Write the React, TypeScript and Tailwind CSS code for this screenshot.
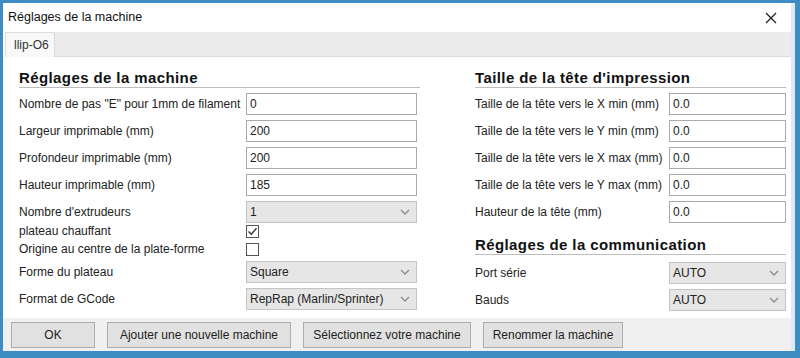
import React from "react";

const font = { fontFamily: "'Liberation Sans', Arial, sans-serif" };

function Chevron() {
  return (
    <svg width="10" height="6" viewBox="0 0 10 6" className="shrink-0">
      <path d="M1 1 L5 5 L9 1" fill="none" stroke="#8a8a8a" strokeWidth="1.3" />
    </svg>
  );
}

function Input({ value, w }: { value: string; w: string }) {
  return (
    <div className={`${w} h-[22px] border border-[#a9a9a9] bg-white flex items-center pl-[3px] text-[12px] text-[#222]`}>
      {value}
    </div>
  );
}

function Select({ value, w }: { value: string; w: string }) {
  return (
    <div className={`${w} h-[22px] border border-[#c4c4c4] bg-[#e6e6e6] flex items-center justify-between pl-[3px] pr-[6px] text-[12px] text-[#222]`}>
      <span>{value}</span>
      <Chevron />
    </div>
  );
}

function Row({ label, children, lw }: { label: string; children: React.ReactNode; lw: string }) {
  return (
    <div className="flex items-center h-[27px]">
      <div className={`${lw} shrink-0 text-[12px] text-[#222] whitespace-nowrap`}>{label}</div>
      {children}
    </div>
  );
}

function Check({ checked }: { checked?: boolean }) {
  return (
    <div className="w-[13px] h-[13px] border border-[#555] bg-white flex items-center justify-center">
      {checked && (
        <svg width="11" height="11" viewBox="0 0 11 11">
          <path d="M1.5 5.5 L4.3 8.3 L9.5 2.2" fill="none" stroke="#333" strokeWidth="1.4" />
        </svg>
      )}
    </div>
  );
}

function Heading({ children, mb }: { children: React.ReactNode; mb: string }) {
  return (
    <div className={`border-b border-[#bdbdbd] pb-[1px] ${mb}`}>
      <div className="text-[15px] leading-[16px] font-bold tracking-[0.4px] text-[#111]">{children}</div>
    </div>
  );
}

function Button({ children, w }: { children: React.ReactNode; w: string }) {
  return (
    <div className={`${w} h-[26px] border border-[#adadad] bg-[#e1e1e1] flex items-center justify-center text-[12px] text-[#222]`}>
      {children}
    </div>
  );
}

export default function App() {
  return (
    <div className="w-[800px] h-[358px] bg-[#3f8cc4] pl-[3px] pr-[5px] pt-[3px] pb-[7px]" style={font}>
      <div className="w-full h-full bg-[#dbeaf5] pr-[4px] flex">
        <div className="flex-1 bg-white flex flex-col">
          {/* Title bar */}
          <div className="h-[29px] flex items-center justify-between pl-[5px] pr-[14px]">
            <span className="text-[12.5px] text-[#111]">Réglages de la machine</span>
            <svg width="12" height="12" viewBox="0 0 12 12">
              <path d="M1 1 L11 11 M11 1 L1 11" stroke="#222" strokeWidth="1.3" />
            </svg>
          </div>
          {/* Tab strip */}
          <div className="h-[25px] flex bg-white pl-[2px]">
            <div className="w-[50px] bg-[#f8f8f8] border-t border-l border-r border-[#dcdcdc] flex items-center pl-[8px] text-[12px] text-[#333]">
              llip-O6
            </div>
            <div className="flex-1 bg-[#ececec] border-b border-[#dcdcdc]" />
          </div>
          {/* Content */}
          <div className="flex-1 flex pl-[16px] pr-[3px] pt-[13px]">
            <div className="w-[401px]">
              <Heading mb="mb-[2px]">Réglages de la machine</Heading>
              <Row label={'Nombre de pas "E" pour  1mm de filament'} lw="w-[227px]">
                <Input value="0" w="w-[171px]" />
              </Row>
              <Row label="Largeur imprimable (mm)" lw="w-[227px]">
                <Input value="200" w="w-[171px]" />
              </Row>
              <Row label="Profondeur imprimable (mm)" lw="w-[227px]">
                <Input value="200" w="w-[171px]" />
              </Row>
              <Row label="Hauteur imprimable (mm)" lw="w-[227px]">
                <Input value="185" w="w-[171px]" />
              </Row>
              <Row label="Nombre d'extrudeurs" lw="w-[227px]">
                <Select value="1" w="w-[171px]" />
              </Row>
              <div className="flex items-center h-[18px] -mt-[3px]">
                <div className="w-[227px] text-[12px] text-[#222]">plateau chauffant</div>
                <Check checked />
              </div>
              <div className="flex items-center h-[18px]">
                <div className="w-[227px] text-[12px] text-[#222]">Origine au centre de la plate-forme</div>
                <Check />
              </div>
              <Row label="Forme du plateau" lw="w-[227px]">
                <Select value="Square" w="w-[171px]" />
              </Row>
              <Row label="Format de GCode" lw="w-[227px]">
                <Select value="RepRap (Marlin/Sprinter)" w="w-[171px]" />
              </Row>
            </div>
            <div className="w-[55px]" />
            <div className="w-[311px]">
              <Heading mb="mb-[2px]">Taille de la tête d'impression</Heading>
              <Row label="Taille de la tête vers le X min (mm)" lw="w-[194px]">
                <Input value="0.0" w="w-[117px]" />
              </Row>
              <Row label="Taille de la tête vers le Y min (mm)" lw="w-[194px]">
                <Input value="0.0" w="w-[117px]" />
              </Row>
              <Row label="Taille de la tête vers le X max (mm)" lw="w-[194px]">
                <Input value="0.0" w="w-[117px]" />
              </Row>
              <Row label="Taille de la tête vers le Y max (mm)" lw="w-[194px]">
                <Input value="0.0" w="w-[117px]" />
              </Row>
              <Row label="Hauteur de la tête (mm)" lw="w-[194px]">
                <Input value="0.0" w="w-[117px]" />
              </Row>
              <div className="h-[12px]" />
              <Heading mb="mb-[4px]">Réglages de la communication</Heading>
              <Row label="Port série" lw="w-[194px]">
                <Select value="AUTO" w="w-[117px]" />
              </Row>
              <Row label="Bauds" lw="w-[194px]">
                <Select value="AUTO" w="w-[117px]" />
              </Row>
            </div>
          </div>
          {/* Bottom bar */}
          <div className="h-[33px] bg-[#f0f0f0] flex items-center pl-[8px] gap-[12px]">
            <Button w="w-[84px]">OK</Button>
            <Button w="w-[184px]">Ajouter une nouvelle machine</Button>
            <Button w="w-[168px]">Sélectionnez votre machine</Button>
            <Button w="w-[140px]">Renommer la machine</Button>
          </div>
        </div>
      </div>
    </div>
  );
}
